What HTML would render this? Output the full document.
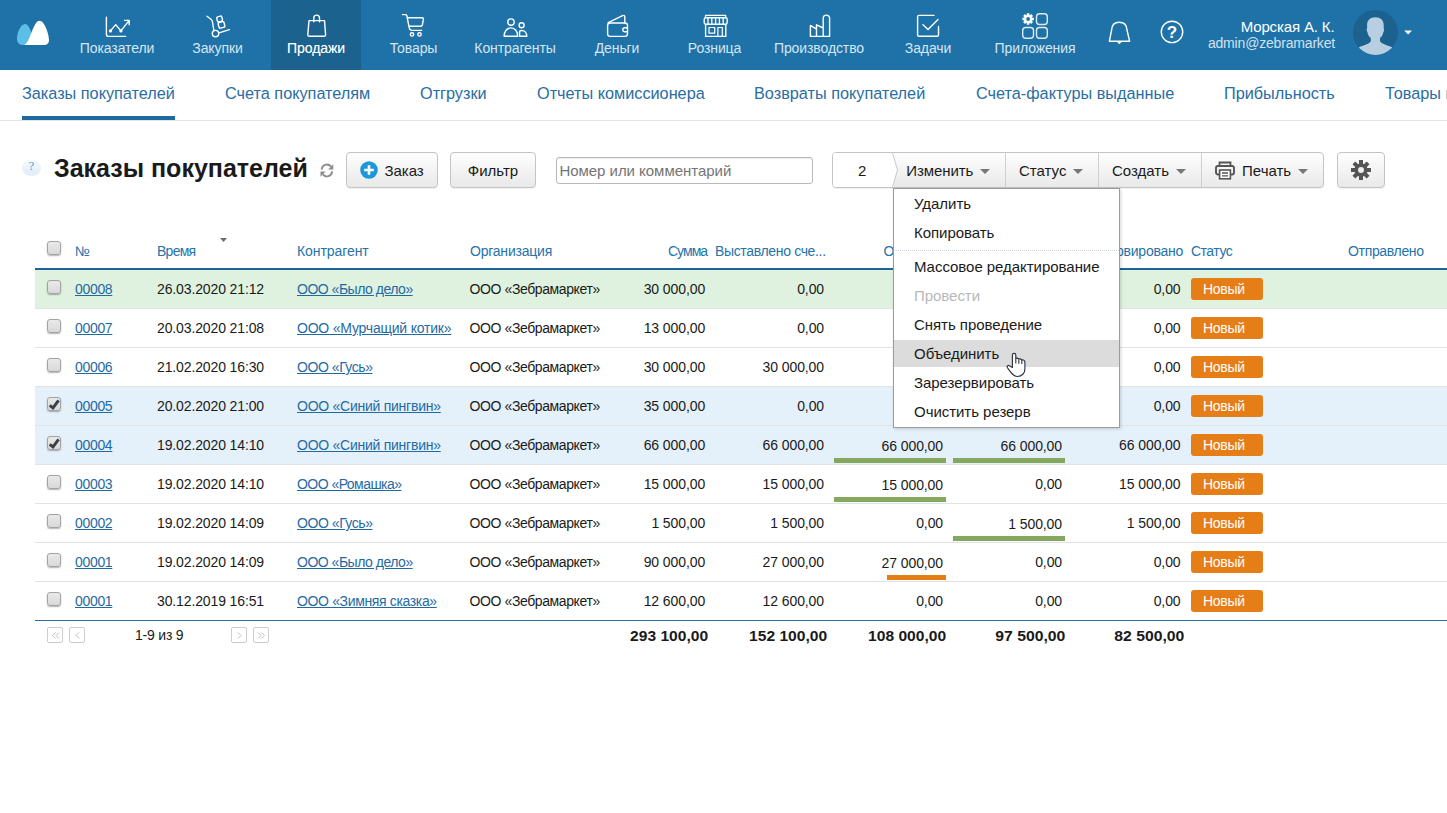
<!DOCTYPE html>
<html><head><meta charset="utf-8">
<style>
*{box-sizing:border-box;margin:0;padding:0}
html,body{width:1447px;height:813px;overflow:hidden;background:#fff}
body{font-family:"Liberation Sans",sans-serif;position:relative;color:#1a1a1a}
.abs{position:absolute}
#nav{position:absolute;left:0;top:0;width:1447px;height:70px;background:#1f72a7}
.ni{position:absolute;top:0;height:70px;color:#d5e6f2;font-size:14px;text-align:center;white-space:nowrap}
.ni .lb{position:absolute;left:50%;transform:translateX(-50%);top:39px;line-height:18px;letter-spacing:-0.1px}
.ni svg{position:absolute;left:50%;top:0}
.ni.act{background:#1c628f;color:#fff}
.ni.act .lb{text-shadow:0 0 0.3px rgba(255,255,255,.5)}
#sub{position:absolute;left:0;top:70px;width:1447px;height:51px;border-bottom:1px solid #e3e3e3;overflow:hidden}
#sub span{position:absolute;top:13px;font-size:16.25px;line-height:20px;color:#286da3;white-space:nowrap}
#sub .ul{position:absolute;left:22px;top:46px;width:153px;height:4px;background:#1f6a9d}
#help{position:absolute;left:22px;top:160px;width:19px;height:16px;border-radius:50%;background:linear-gradient(#f6fafd 0,#eef5fb 35%,#e2eff9 75%,#e2eff9 100%);color:#5a9fd2;font-size:13px;line-height:11px;text-align:center;font-family:'Liberation Serif',serif}
#title{position:absolute;left:54px;top:152px;font-size:25px;line-height:32px;font-weight:bold;color:#1a1a1a;white-space:nowrap}
.btn{position:absolute;top:152px;height:36px;border:1px solid #c4c4c4;border-radius:4px;background:linear-gradient(#fefefe,#e9e9e9);font-size:15px;line-height:36px;color:#1a1a1a;white-space:nowrap;box-shadow:0 1px 1px rgba(0,0,0,.06)}
#search{position:absolute;left:556px;top:157px;width:257px;height:27px;border:1px solid #b9b9b9;border-radius:3px;background:#fff;font-size:15px;line-height:26px;color:#757575;padding-left:2.4px;letter-spacing:-0.03px;box-shadow:inset 0 1px 1px rgba(0,0,0,.08)}
#grp{position:absolute;left:832px;top:152px;width:492px;height:36px;border:1px solid #c4c4c4;border-radius:4px;background:linear-gradient(#fefefe,#e9e9e9);font-size:15px;color:#1a1a1a;box-shadow:0 1px 1px rgba(0,0,0,.06)}
#grp .t{position:absolute;top:0;line-height:36px;white-space:nowrap}
#grp .sep{position:absolute;top:0;width:1px;height:34px;background:#cfcfcf}
#grp .car{position:absolute;top:16px;width:0;height:0;border-left:5px solid transparent;border-right:5px solid transparent;border-top:5.5px solid #777}
.hd{position:absolute;top:242px;font-size:14px;line-height:18px;color:#2673a9;white-space:nowrap}
.row{position:absolute;left:35px;width:1412px;height:39px;border-bottom:1px solid #e2e2e2;font-size:14px}
.row span,.row a{position:absolute;top:10px;line-height:18px;white-space:nowrap}
.row a{color:#1f6aa3;text-decoration:underline}
.cb{position:absolute;left:12px;width:14px;height:14px;border:1px solid #a3a3a3;border-radius:3px;background:linear-gradient(#e9e9e9,#d9d9d9);box-shadow:0 1px 1.5px rgba(0,0,0,.3)}
.bdg{position:absolute;left:1156px;top:8px;width:72px;height:22px;border-radius:3px;background:#e67e17;color:#fff;font-size:14px;line-height:22px;padding-left:12px;letter-spacing:-0.3px}
.bar{position:absolute;height:5px;background:#86a95b}
.pg{position:absolute;top:627px;width:16px;height:16px;border:1px solid #cdcdcd;border-radius:2px}
.pg svg{position:absolute;left:0.5px;top:0.5px}
.tot{top:627px;font-size:14px;line-height:18px;font-weight:bold;white-space:nowrap}
#dd{position:absolute;left:893px;top:188px;width:227px;height:240px;background:#fff;border:1px solid #9c9c9c;box-shadow:1px 1px 3px rgba(0,0,0,.16);font-size:15px;color:#1a1a1a}
#dd div.i{position:absolute;left:0;width:225px;height:27px;line-height:27px;padding-left:20px;white-space:nowrap;letter-spacing:-0.04px}
#uname{right:112.5px;top:18px;letter-spacing:-0.14px;font-size:15px;line-height:18px;color:#fff;white-space:nowrap}
#umail{right:112px;top:34px;letter-spacing:-0.18px;font-size:14px;line-height:18px;color:#cfe2f0;white-space:nowrap}

</style></head><body>
<div id="nav">
<div class="ni" style="left:64px;width:106px"><span class="lb">Показатели</span></div>
<div class="ni" style="left:177px;width:81px"><span class="lb">Закупки</span></div>
<div class="ni act" style="left:271px;width:90px"><span class="lb">Продажи</span></div>
<div class="ni" style="left:374px;width:79px"><span class="lb">Товары</span></div>
<div class="ni" style="left:460px;width:110px"><span class="lb">Контрагенты</span></div>
<div class="ni" style="left:577px;width:80px"><span class="lb">Деньги</span></div>
<div class="ni" style="left:670px;width:89px"><span class="lb">Розница</span></div>
<div class="ni" style="left:760px;width:118px"><span class="lb">Производство</span></div>
<div class="ni" style="left:888px;width:80px"><span class="lb">Задачи</span></div>
<div class="ni" style="left:980px;width:110px"><span class="lb">Приложения</span></div>
<svg style="position:absolute;left:0;top:0" width="1447" height="70" viewBox="0 0 1447 70">
<!-- logo -->
<path d="M22.5 45 C18.5 45 17 42 17 38.5 C17 33 20.5 24 25 24 C28 24 30 29 31.8 33.2 C30 38 27.5 43.5 24 45Z" fill="#5bbfea"/>
<path d="M24 45 C30.5 42.5 33 20.7 39.5 20.7 C44.5 20.7 49 34 49 40 C49 43.5 47 45 44 45Z" fill="#fff"/>
<g fill="none" stroke="#fff" stroke-width="1.4" stroke-linecap="round" stroke-linejoin="round">
<!-- chart -->
<path d="M106.4 17.2V34.2Q106.4 36.4 108.6 36.4H125.6"/>
<path d="M110.5 30.9L115.7 24.6L120.9 30.9L129 20.6M124.6 20.4H129.2V24.8"/>
<circle cx="110.5" cy="30.9" r="0.9" fill="#fff"/><circle cx="120.9" cy="30.9" r="0.9" fill="#fff"/>
<!-- dolly -->
<path d="M207 16.2L211 19.2Q212.2 20.2 212.5 22L213.8 30"/>
<circle cx="215.5" cy="33.6" r="3.2"/>
<path d="M219 32.9L229.4 29.6"/>
<rect x="-2.6" y="-2.6" width="5.2" height="5.2" rx="1.2" transform="translate(219.6 19) rotate(-14)"/>
<rect x="-3" y="-2.9" width="6" height="5.8" rx="1.2" transform="translate(221.5 24.9) rotate(-14)"/>
<!-- bag -->
<path d="M309 20.6H324.5L325.6 34.6Q325.7 36.3 324 36.3H309.4Q307.7 36.3 307.8 34.6Z"/>
<path d="M313.8 21.8V18A2.85 2.85 0 0 1 319.5 18V21.8"/>
<!-- cart -->
<path d="M402.4 14.6H405.6Q406.6 14.6 406.8 15.6L409.3 28.2Q409.8 30.4 412 30.4H421.6"/>
<path d="M408 17.8H422Q423.8 17.8 423.4 19.4L422.3 25Q422 26.2 420.8 26.2H409.2"/>
<circle cx="412" cy="34.4" r="1.7"/><circle cx="419.5" cy="34.4" r="1.7"/>
<!-- people -->
<circle cx="511" cy="22.1" r="3.2"/>
<path d="M504.1 36.3C504.1 31.5 507 27.9 511 27.9C515 27.9 517.7 31.5 517.7 36.3Z"/>
<circle cx="521.6" cy="25.3" r="2.5"/>
<path d="M519.6 36.3V31.2Q520.4 30.5 521.6 30.5C524.8 30.5 526.8 33.2 526.8 36.3Z"/>
<!-- wallet -->
<rect x="607.6" y="23" width="19.9" height="13.4" rx="2.6"/>
<path d="M608.2 22.6L622.6 15.6Q624.8 14.8 624.8 17V23"/>
<path d="M627.3 27.7H624.8A2.05 2.05 0 0 0 624.8 31.8H627.3"/>
<!-- shop -->
<path d="M705.5 17.6V15.4H725.7V17.6" stroke-width="1.2"/>
<rect x="704.2" y="17.8" width="23" height="6.4" rx="1.6"/>
<path d="M708 18V24M711.8 18V24M715.6 18V24M719.4 18V24M723.2 18V24" stroke-width="1.3"/>
<path d="M705.6 24.4V36.4H725.8V24.4"/>
<rect x="709" y="27.5" width="5.7" height="5.7" stroke-width="1.2"/>
<path d="M717.9 36.4V27.5H722.3V36.4" stroke-width="1.2"/>
<!-- factory -->
<path d="M810.4 36.4V25.4L816.5 29.2V24.8L823.2 28V36.4M823.2 28V18.3A3.2 3.2 0 0 1 829.6 18.3V36.4H810.4M816.5 29V36.4"/>
<!-- tasks -->
<path d="M934 15.4H919Q917.6 15.4 917.6 16.8V34.9Q917.6 36.3 919 36.3H937.1Q938.5 36.3 938.5 34.9V26.4"/>
<path d="M923 24.8L928 29.6L938 19.6"/>
<!-- apps -->
<rect x="1036.5" y="13.7" width="10.8" height="10.8" rx="3" opacity=".85"/>
<rect x="1022.7" y="27.5" width="10.8" height="10.8" rx="3" opacity=".85"/>
<rect x="1036.5" y="27.5" width="10.8" height="10.8" rx="3" opacity=".85"/>
<!-- bell -->
<path d="M1109.4 41.2L1111.6 30Q1112 22.2 1119.2 22.2Q1126.6 22.2 1127 30L1129.6 41.2Z"/>
<path d="M1116.6 41.6H1122L1119.3 44.2Z" fill="#fff" stroke="none"/>
<!-- help -->
<circle cx="1172" cy="31.9" r="10.7"/>
</g>
<!-- gear -->
<g transform="translate(1028.1 19)" fill="#fff"><circle r="4.1"/><rect x="-1.3" y="-5.7" width="2.6" height="3" transform="rotate(0)"/><rect x="-1.3" y="-5.7" width="2.6" height="3" transform="rotate(45)"/><rect x="-1.3" y="-5.7" width="2.6" height="3" transform="rotate(90)"/><rect x="-1.3" y="-5.7" width="2.6" height="3" transform="rotate(135)"/><rect x="-1.3" y="-5.7" width="2.6" height="3" transform="rotate(180)"/><rect x="-1.3" y="-5.7" width="2.6" height="3" transform="rotate(225)"/><rect x="-1.3" y="-5.7" width="2.6" height="3" transform="rotate(270)"/><rect x="-1.3" y="-5.7" width="2.6" height="3" transform="rotate(315)"/><circle r="1.9" fill="#1f72a7"/></g>
<!-- avatar -->
<circle cx="1375.5" cy="32.4" r="22.5" fill="#1c628f"/>
<clipPath id="avc"><circle cx="1375.5" cy="32.4" r="22.5"/></clipPath>
<g clip-path="url(#avc)" fill="#b7cfe0"><path d="M1375.4 17.2C1380.5 17.2 1383.7 20 1383.7 25V28.4C1384.4 29 1384.3 31 1383.4 32C1382.9 35 1381.6 36.8 1380 38V41C1381 44 1388 45.5 1392 47.2V56H1359V47.2C1363 45.5 1370 44 1370.8 41V38C1369.2 36.8 1367.9 35 1367.4 32C1366.5 31 1366.4 29 1367.1 28.4V25C1367.1 20 1370.3 17.2 1375.4 17.2Z"/></g>
<path d="M1404.2 30.5H1412L1408.1 34.4Z" fill="#fff"/>
</svg>
<span class="abs" style="left:1166.8px;top:22.5px;font-size:17px;line-height:19px;font-weight:bold;color:#fff">?</span>
<span class="abs" id="uname">Морская А. К.</span>
<span class="abs" id="umail">admin@zebramarket</span>
</div>
<div id="sub">
<span style="left:22px">Заказы покупателей</span>
<span style="left:225px">Счета покупателям</span>
<span style="left:420px">Отгрузки</span>
<span style="left:537px">Отчеты комиссионера</span>
<span style="left:754px">Возвраты покупателей</span>
<span style="left:976px">Счета-фактуры выданные</span>
<span style="left:1224px">Прибыльность</span>
<span style="left:1385px">Товары на реализации</span>
<div class="ul"></div>
</div>

<div id="help">?</div>
<div id="title">Заказы покупателей</div>
<svg class="abs" style="left:318px;top:161px" width="18" height="18" viewBox="318 161 18 18"><g fill="none" stroke="#8c8c8c" stroke-width="1.9"><path d="M321.7 169.6A5.2 5.2 0 0 1 331 166.6"/><path d="M332.1 171.4A5.2 5.2 0 0 1 322.8 174.4"/></g><path d="M333.3 164.2V169.4H328.2Z" fill="#8c8c8c"/><path d="M320.5 176.8V171.6H325.6Z" fill="#8c8c8c"/></svg>
<div class="btn" style="left:346px;width:92px"><svg class="abs" style="left:13px;top:7.6px" width="18" height="18" viewBox="0 0 18 18"><circle cx="9" cy="9" r="8.8" fill="#1d97d9"/><path d="M9 4.2v9.6M4.2 9h9.6" stroke="#fff" stroke-width="2.6"/></svg><span class="abs" style="left:37.4px;top:0">Заказ</span></div>
<div class="btn" style="left:450px;width:86px;text-align:center">Фильтр</div>
<div id="search">Номер или комментарий</div>
<div id="grp"><div class="abs" style="left:0;top:0;width:61px;height:34px;background:#fff;border-radius:3px 0 0 3px"></div><svg class="abs" style="left:58.3px;top:0" width="8" height="34" viewBox="0 0 8 34"><path d="M0 0 L1.5 0 L6.5 17 L1.5 34 L0 34Z" fill="#fff"/><path d="M1.5 0 L6.5 17 L1.5 34" fill="none" stroke="#c9c9c9" stroke-width="1"/></svg><span class="t" style="left:25px">2</span>
<span class="t" style="left:73.2px;letter-spacing:-0.08px">Изменить</span><i class="car" style="left:147px"></i><i class="sep" style="left:172px"></i>
<span class="t" style="left:186px">Статус</span><i class="car" style="left:240px"></i><i class="sep" style="left:265px"></i>
<span class="t" style="left:279px">Создать</span><i class="car" style="left:343px"></i><i class="sep" style="left:368px"></i>
<svg class="abs" style="left:382px;top:8px" width="20" height="19" viewBox="0 0 20 19"><path d="M4.5 5V1.5h11V5" fill="none" stroke="#555" stroke-width="1.8"/><rect x="1" y="5" width="18" height="8.5" rx="2" fill="none" stroke="#555" stroke-width="1.9"/><rect x="4.6" y="9" width="10.8" height="8.8" fill="#fff" stroke="#555" stroke-width="1.6"/><path d="M7 12h6M7 14.8h6" stroke="#555" stroke-width="1.3"/></svg>
<span class="t" style="left:409px">Печать</span><i class="car" style="left:465px"></i></div>
<div class="btn" style="left:1337px;width:48px"><svg class="abs" style="left:13px;top:7px" width="20" height="20" viewBox="-10 -10 20 20"><g fill="#555"><circle r="6.6"/><rect x="-2" y="-10" width="4" height="5" transform="rotate(0)"/><rect x="-2" y="-10" width="4" height="5" transform="rotate(45)"/><rect x="-2" y="-10" width="4" height="5" transform="rotate(90)"/><rect x="-2" y="-10" width="4" height="5" transform="rotate(135)"/><rect x="-2" y="-10" width="4" height="5" transform="rotate(180)"/><rect x="-2" y="-10" width="4" height="5" transform="rotate(225)"/><rect x="-2" y="-10" width="4" height="5" transform="rotate(270)"/><rect x="-2" y="-10" width="4" height="5" transform="rotate(315)"/></g><circle r="3" fill="#ededed"/></svg></div>

<div class="cb" style="left:47px;top:241px"></div>
<span class="hd" style="left:75px;letter-spacing:-0.519px;">№</span>
<span class="hd" style="left:157px;letter-spacing:-0.743px;">Время</span>
<span class="hd" style="left:297px;letter-spacing:-0.069px;">Контрагент</span>
<span class="hd" style="left:470px;letter-spacing:-0.222px;">Организация</span>
<span class="hd" style="left:1191px;letter-spacing:-0.509px;">Статус</span>
<span class="hd" style="left:1348px;letter-spacing:-0.334px;">Отправлено</span>
<span class="hd" style="left:715px;letter-spacing:-0.342px;">Выставлено сче...</span>
<span class="hd" style="left:667.9px;letter-spacing:-0.938px">Сумма</span>
<span class="hd" style="left:883.5px;letter-spacing:-0.277px">Оплачено</span>
<span class="hd" style="left:995.0px;letter-spacing:0.015px">Отгружено</span>
<span class="hd" style="left:1072.0px;letter-spacing:-0.250px">Зарезервировано</span>
<svg class="abs" style="left:220px;top:238px" width="7" height="4"><path d="M0 0h7L3.5 4z" fill="#6d6d6d"/></svg>
<div class="abs" style="left:35px;top:268px;width:1412px;height:2px;background:#1c6397"></div>
<div class="row" style="top:270px;background:#dff2df"><div class="cb" style="top:10px"></div><a style="left:40px;letter-spacing:-0.326px;">00008</a><span style="left:122px;letter-spacing:-0.125px;">26.03.2020 21:12</span><a style="left:262px;letter-spacing:-0.486px;">ООО «Было дело»</a><span style="left:434.6px;letter-spacing:-0.401px;">ООО «Зебрамаркет»</span><span style="left:608.7px;top:10px;letter-spacing:-0.1px">30 000,00</span><span style="left:762.2px;top:10px;letter-spacing:-0.1px">0,00</span><span style="left:1118.7px;top:10px;letter-spacing:-0.1px">0,00</span><div class="bdg">Новый</div></div>
<div class="row" style="top:309px;background:#fff"><div class="cb" style="top:10px"></div><a style="left:40px;letter-spacing:-0.326px;">00007</a><span style="left:122px;letter-spacing:-0.125px;">20.03.2020 21:08</span><a style="left:262px;letter-spacing:-0.211px;">ООО «Мурчащий котик»</a><span style="left:434.6px;letter-spacing:-0.401px;">ООО «Зебрамаркет»</span><span style="left:608.7px;top:10px;letter-spacing:-0.1px">13 000,00</span><span style="left:762.2px;top:10px;letter-spacing:-0.1px">0,00</span><span style="left:1118.7px;top:10px;letter-spacing:-0.1px">0,00</span><div class="bdg">Новый</div></div>
<div class="row" style="top:348px;background:#fff"><div class="cb" style="top:10px"></div><a style="left:40px;letter-spacing:-0.326px;">00006</a><span style="left:122px;letter-spacing:-0.125px;">21.02.2020 16:30</span><a style="left:262px;letter-spacing:-0.441px;">ООО «Гусь»</a><span style="left:434.6px;letter-spacing:-0.401px;">ООО «Зебрамаркет»</span><span style="left:608.7px;top:10px;letter-spacing:-0.1px">30 000,00</span><span style="left:727.6px;top:10px;letter-spacing:-0.1px">30 000,00</span><span style="left:1118.7px;top:10px;letter-spacing:-0.1px">0,00</span><div class="bdg">Новый</div></div>
<div class="row" style="top:387px;background:#e4f0fa"><div class="cb" style="top:10px"><svg width="12" height="12" viewBox="0 0 12 12" style="position:absolute;left:0;top:0"><path d="M1.7 7.3 L5 9.9 L10.6 2.3" fill="none" stroke="#3a4048" stroke-width="2.9"/></svg></div><a style="left:40px;letter-spacing:-0.326px;">00005</a><span style="left:122px;letter-spacing:-0.125px;">20.02.2020 21:00</span><a style="left:262px;letter-spacing:-0.255px;">ООО «Синий пингвин»</a><span style="left:434.6px;letter-spacing:-0.401px;">ООО «Зебрамаркет»</span><span style="left:608.7px;top:10px;letter-spacing:-0.1px">35 000,00</span><span style="left:762.2px;top:10px;letter-spacing:-0.1px">0,00</span><span style="left:1118.7px;top:10px;letter-spacing:-0.1px">0,00</span><div class="bdg">Новый</div></div>
<div class="row" style="top:426px;background:#e4f0fa"><div class="cb" style="top:10px"><svg width="12" height="12" viewBox="0 0 12 12" style="position:absolute;left:0;top:0"><path d="M1.7 7.3 L5 9.9 L10.6 2.3" fill="none" stroke="#3a4048" stroke-width="2.9"/></svg></div><a style="left:40px;letter-spacing:-0.326px;">00004</a><span style="left:122px;letter-spacing:-0.125px;">19.02.2020 14:10</span><a style="left:262px;letter-spacing:-0.255px;">ООО «Синий пингвин»</a><span style="left:434.6px;letter-spacing:-0.401px;">ООО «Зебрамаркет»</span><span style="left:608.7px;top:10px;letter-spacing:-0.1px">66 000,00</span><span style="left:727.6px;top:10px;letter-spacing:-0.1px">66 000,00</span><span style="left:846.6px;top:11px;letter-spacing:-0.1px">66 000,00</span><div class="bar" style="left:799px;top:32px;width:112px;background:#85a85e"></div><span style="left:965.6px;top:11px;letter-spacing:-0.1px">66 000,00</span><div class="bar" style="left:918px;top:32px;width:112px;background:#85a85e"></div><span style="left:1084.1px;top:10px;letter-spacing:-0.1px">66 000,00</span><div class="bdg">Новый</div></div>
<div class="row" style="top:465px;background:#fff"><div class="cb" style="top:10px"></div><a style="left:40px;letter-spacing:-0.326px;">00003</a><span style="left:122px;letter-spacing:-0.125px;">19.02.2020 14:10</span><a style="left:262px;letter-spacing:-0.539px;">ООО «Ромашка»</a><span style="left:434.6px;letter-spacing:-0.401px;">ООО «Зебрамаркет»</span><span style="left:608.7px;top:10px;letter-spacing:-0.1px">15 000,00</span><span style="left:727.6px;top:10px;letter-spacing:-0.1px">15 000,00</span><span style="left:846.6px;top:11px;letter-spacing:-0.1px">15 000,00</span><div class="bar" style="left:799px;top:32px;width:112px;background:#85a85e"></div><span style="left:1000.2px;top:10px;letter-spacing:-0.1px">0,00</span><span style="left:1084.1px;top:10px;letter-spacing:-0.1px">15 000,00</span><div class="bdg">Новый</div></div>
<div class="row" style="top:504px;background:#fff"><div class="cb" style="top:10px"></div><a style="left:40px;letter-spacing:-0.326px;">00002</a><span style="left:122px;letter-spacing:-0.125px;">19.02.2020 14:09</span><a style="left:262px;letter-spacing:-0.441px;">ООО «Гусь»</a><span style="left:434.6px;letter-spacing:-0.401px;">ООО «Зебрамаркет»</span><span style="left:616.4px;top:10px;letter-spacing:-0.1px">1 500,00</span><span style="left:735.3px;top:10px;letter-spacing:-0.1px">1 500,00</span><span style="left:881.2px;top:10px;letter-spacing:-0.1px">0,00</span><span style="left:973.3px;top:11px;letter-spacing:-0.1px">1 500,00</span><div class="bar" style="left:918px;top:32px;width:112px;background:#85a85e"></div><span style="left:1091.8px;top:10px;letter-spacing:-0.1px">1 500,00</span><div class="bdg">Новый</div></div>
<div class="row" style="top:543px;background:#fff"><div class="cb" style="top:10px"></div><a style="left:40px;letter-spacing:-0.326px;">00001</a><span style="left:122px;letter-spacing:-0.125px;">19.02.2020 14:09</span><a style="left:262px;letter-spacing:-0.486px;">ООО «Было дело»</a><span style="left:434.6px;letter-spacing:-0.401px;">ООО «Зебрамаркет»</span><span style="left:608.7px;top:10px;letter-spacing:-0.1px">90 000,00</span><span style="left:727.6px;top:10px;letter-spacing:-0.1px">27 000,00</span><span style="left:846.6px;top:11px;letter-spacing:-0.1px">27 000,00</span><div class="bar" style="left:852px;top:32px;width:59px;background:#e67e17"></div><span style="left:1000.2px;top:10px;letter-spacing:-0.1px">0,00</span><span style="left:1118.7px;top:10px;letter-spacing:-0.1px">0,00</span><div class="bdg">Новый</div></div>
<div class="row" style="top:582px;background:#fff"><div class="cb" style="top:10px"></div><a style="left:40px;letter-spacing:-0.326px;">00001</a><span style="left:122px;letter-spacing:-0.125px;">30.12.2019 16:51</span><a style="left:262px;letter-spacing:-0.353px;">ООО «Зимняя сказка»</a><span style="left:434.6px;letter-spacing:-0.401px;">ООО «Зебрамаркет»</span><span style="left:608.7px;top:10px;letter-spacing:-0.1px">12 600,00</span><span style="left:727.6px;top:10px;letter-spacing:-0.1px">12 600,00</span><span style="left:881.2px;top:10px;letter-spacing:-0.1px">0,00</span><span style="left:1000.2px;top:10px;letter-spacing:-0.1px">0,00</span><span style="left:1118.7px;top:10px;letter-spacing:-0.1px">0,00</span><div class="bdg">Новый</div></div>
<div class="abs" style="left:35px;top:620px;width:1412px;height:1px;background:#2b6f9f"></div>
<div class="pg" style="left:47px"><svg width="13" height="13" viewBox="0 0 13 13"><path d="M6.5 3.5L3.5 6.5L6.5 9.5M10 3.5L7 6.5L10 9.5" fill="none" stroke="#c2c2c2" stroke-width="1"/></svg></div>
<div class="pg" style="left:69px"><svg width="13" height="13" viewBox="0 0 13 13"><path d="M8 3.5L5 6.5L8 9.5" fill="none" stroke="#c2c2c2" stroke-width="1"/></svg></div>
<div class="pg" style="left:231px"><svg width="13" height="13" viewBox="0 0 13 13"><path d="M5 3.5L8 6.5L5 9.5" fill="none" stroke="#c2c2c2" stroke-width="1"/></svg></div>
<div class="pg" style="left:253px"><svg width="13" height="13" viewBox="0 0 13 13"><path d="M3 3.5L6 6.5L3 9.5M6.5 3.5L9.5 6.5L6.5 9.5" fill="none" stroke="#c2c2c2" stroke-width="1"/></svg></div>
<span class="abs" style="left:135px;top:626px;font-size:14px;line-height:18px;letter-spacing:-0.2px">1-9 из 9</span>
<span class="abs tot" style="left:637.9px;transform:scaleX(1.1132);transform-origin:100% 50%">293 100,00</span>
<span class="abs tot" style="left:756.9px;transform:scaleX(1.1132);transform-origin:100% 50%">152 100,00</span>
<span class="abs tot" style="left:875.9px;transform:scaleX(1.1132);transform-origin:100% 50%">108 000,00</span>
<span class="abs tot" style="left:1002.7px;transform:scaleX(1.1239);transform-origin:100% 50%">97 500,00</span>
<span class="abs tot" style="left:1121.7px;transform:scaleX(1.1239);transform-origin:100% 50%">82 500,00</span>
<div id="dd"><div class="i" style="top:1px;">Удалить</div><div class="i" style="top:30px;">Копировать</div><div class="i" style="top:64px;">Массовое редактирование</div><div class="i" style="top:93px;color:#b8b8b8;">Провести</div><div class="i" style="top:122px;">Снять проведение</div><div class="i" style="top:151px;background:#dcdcdc;">Объединить</div><div class="i" style="top:180px;">Зарезервировать</div><div class="i" style="top:209px;">Очистить резерв</div><div class="abs" style="left:0;top:61px;width:225px;height:0;border-top:1px dotted #c9d6e4"></div></div>
<svg class="abs" style="left:1000px;top:348px" width="32" height="32" viewBox="1000 348 32 32"><path d="M1012.4 367.4V355a1.7 1.7 0 0 1 3.4 0V358.4q1.7-0.7 3 0.6q1.7-0.5 3 0.9q3.1-0.4 3.1 2.6V369C1024.9 373 1022 376.5 1017.5 376.5C1013.5 376.5 1011 373 1007.6 368C1006.6 366.4 1007.8 364.9 1009.4 365.7Z" fill="#fff" stroke="#2b3340" stroke-width="1.15" stroke-linejoin="round"/><path d="M1015.8 358.4V363.6M1018.8 359.2V363.8M1021.8 360V364" fill="none" stroke="#2b3340" stroke-width="1.1"/></svg>

</body></html>
